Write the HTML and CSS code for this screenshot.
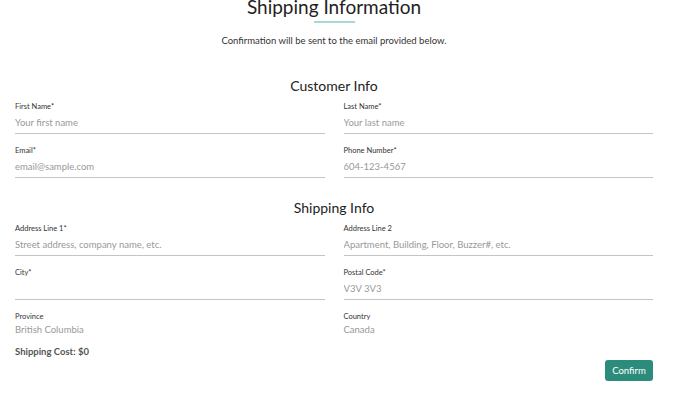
FILE: index.html
```html
<!DOCTYPE html>
<html lang="en">
<head>
    <meta charset="UTF-8">
    <meta name="viewport" content="width=device-width, initial-scale=1.0">
    <title>Shipping Information</title>
    <link rel="stylesheet" href="styles.css">
</head>
<body>
    <div class="page">
        <header class="page-header">
            <h1>Shipping Information</h1>
            <div class="title-line"></div>
            <p class="subtitle">Confirmation will be sent to the email provided below.</p>
        </header>

        <!-- Customer Info -->
        <h2 class="section-title first">Customer Info</h2>
        <div class="form-grid">
            <div class="field">
                <label for="first-name">First Name*</label>
                <input type="text" id="first-name" placeholder="Your first name">
            </div>
            <div class="field">
                <label for="last-name">Last Name*</label>
                <input type="text" id="last-name" placeholder="Your last name">
            </div>
            <div class="field">
                <label for="email">Email*</label>
                <input type="text" id="email" placeholder="email@sample.com">
            </div>
            <div class="field">
                <label for="phone">Phone Number*</label>
                <input type="text" id="phone" placeholder="604-123-4567">
            </div>
        </div>

        <!-- Shipping Info -->
        <h2 class="section-title">Shipping Info</h2>
        <div class="form-grid">
            <div class="field">
                <label for="address1">Address Line 1*</label>
                <input type="text" id="address1" placeholder="Street address, company name, etc.">
            </div>
            <div class="field">
                <label for="address2">Address Line 2</label>
                <input type="text" id="address2" placeholder="Apartment, Building, Floor, Buzzer#, etc.">
            </div>
            <div class="field">
                <label for="city">City*</label>
                <input type="text" id="city">
            </div>
            <div class="field">
                <label for="postal">Postal Code*</label>
                <input type="text" id="postal" placeholder="V3V 3V3">
            </div>
            <div class="field static">
                <label>Province</label>
                <div class="value">British Columbia</div>
            </div>
            <div class="field static">
                <label>Country</label>
                <div class="value">Canada</div>
            </div>
        </div>

        <p class="shipping-cost">Shipping Cost: $0</p>
        <div class="actions">
            <button class="confirm-btn">Confirm</button>
        </div>
    </div>
</body>
</html>
```

FILE: styles.css
```css
body {
    font-family: Lato, "Noto Sans", sans-serif;
    margin: 0;
    padding: 0;
    background-color: #fff;
    color: #333;
}

.page {
    padding: 0 35px 0 15px;
}

.page-header {
    text-align: center;
}

.page-header h1 {
    margin: -5px 0 0;
    font-size: 19px;
    font-weight: 400;
    line-height: 24px;
    color: #222;
}

.title-line {
    width: 41px;
    height: 2px;
    margin: 2px auto 0;
    background-color: #a6dad6;
}

.subtitle {
    margin: 11px 0 0;
    font-size: 9.5px;
    line-height: 14px;
    color: #333;
}

.section-title {
    margin: 10px 0 4px;
    font-size: 14px;
    font-weight: 400;
    line-height: 20px;
    text-align: center;
    color: #222;
}

.section-title.first {
    margin-top: 28px;
}

.form-grid {
    display: grid;
    grid-template-columns: 1fr 1fr;
    column-gap: 19px;
}

.field {
    display: flex;
    flex-direction: column;
    margin-bottom: 10px;
}

.field label {
    padding-top: 2px;
    font-size: 7.5px;
    line-height: 10px;
    color: #333;
}

.field input {
    box-sizing: content-box;
    height: 21px;
    padding: 0;
    border: none;
    border-bottom: 1px solid #c4c4c4;
    font-family: inherit;
    font-size: 9.5px;
    color: #333;
    outline: none;
    background: transparent;
}

.field input::placeholder {
    color: #999;
}

.field.static {
    margin-bottom: 0;
}

.value {
    margin-top: 1px;
    font-size: 9.5px;
    line-height: 14px;
    color: #999;
}

.shipping-cost {
    margin: 8px 0 0;
    font-size: 9.5px;
    font-weight: 700;
    line-height: 14px;
    color: #555;
}

.actions {
    display: flex;
    justify-content: flex-end;
    margin-top: 1px;
}

.confirm-btn {
    width: 48px;
    height: 21px;
    padding: 0;
    background-color: #2b8c7c;
    color: #fff;
    border: none;
    border-radius: 3px;
    font-family: inherit;
    font-size: 9.5px;
    cursor: pointer;
}

.confirm-btn:hover {
    background-color: #237466;
}
```
